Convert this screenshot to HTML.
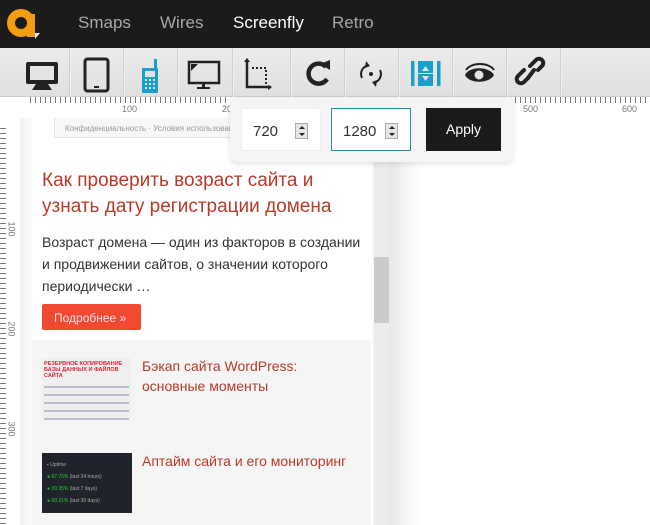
<!DOCTYPE html>
<html style="overflow:hidden;width:650px;height:525px"><head><meta charset="utf-8"><style>
*{margin:0;padding:0;box-sizing:border-box}
body{width:650px;height:525px;overflow:hidden;background:#fff;font-family:"Liberation Sans",Arial,sans-serif;position:relative}
.top{position:absolute;left:0;top:0;width:650px;height:48px;background:#1b1b1b}
.nav{position:absolute;top:13px;font-size:17px;color:#a8a8a8}
.tb{position:absolute;left:0;top:48px;width:650px;height:49px;background:linear-gradient(#ebebeb,#e0e0e0);border-bottom:1px solid #ccc}
.sep{position:absolute;top:0;width:1px;height:49px;background:#d0d0d0;box-shadow:1px 0 0 #f0f0f0}
.ic{position:absolute;top:0}
.hr{position:absolute;left:30px;top:97px;width:620px;height:6px;background:repeating-linear-gradient(90deg,#777 0 1px,transparent 1px 5px)}
.vr{position:absolute;left:0;top:128px;width:6px;height:397px;background:repeating-linear-gradient(180deg,#777 0 1px,transparent 1px 5px)}
.lab{position:absolute;font-size:9px;color:#777}
.vl{position:absolute;font-size:9px;color:#777;transform:rotate(90deg);left:4px}
.frame{position:absolute;left:20px;top:118px;width:400px;height:407px;background:linear-gradient(90deg,#f0f0f0 0,#fafafa 12px,#fff 12px,#fff 352px,#f0f0f0 354px,#e8e8e8 370px,#f5f5f5 385px,#fff 400px)}
.page{position:absolute;left:32px;top:118px;width:339px;height:407px;background:#fff;overflow:hidden}
.sb{position:absolute;left:374px;top:118px;width:15px;height:407px;background:#ececec}
.thumb{position:absolute;left:374px;top:257px;width:15px;height:66px;background:#cbcbcb}
.pop{position:absolute;left:230px;top:97px;width:283px;height:65px;background:#f5f5f5;border-radius:0 0 8px 8px;box-shadow:0 2px 6px rgba(0,0,0,.12)}
.inp{position:absolute;top:11px;width:80px;height:43px;background:#fff;font-size:15px;color:#333;padding:14px 0 0 11px}
.spin{position:absolute;right:12px;top:14px;width:13px;height:16px;border:1px solid #aaa;background:#e6e6e6}
.spin:before{content:"";position:absolute;left:3px;top:2px;border:3px solid transparent;border-bottom:3px solid #222;border-top:0}
.spin:after{content:"";position:absolute;left:3px;top:9px;border:3px solid transparent;border-top:3px solid #222;border-bottom:0}
</style></head><body>
<div class="top">
<svg style="position:absolute;left:6px;top:6px" width="36" height="36" viewBox="0 0 36 36"><circle cx="15" cy="17" r="10" fill="none" stroke="#f39c12" stroke-width="8"/><rect x="21" y="8" width="8" height="23" fill="#f39c12"/><path d="M29 27 L34 27 L29 33Z" fill="#eee"/></svg>
<div class="nav" style="left:78px">Smaps</div>
<div class="nav" style="left:160px">Wires</div>
<div class="nav" style="left:233px;color:#fff">Screenfly</div>
<div class="nav" style="left:332px">Retro</div>
</div>
<div class="tb">
<div class="sep" style="left:69px"></div><div class="sep" style="left:123px"></div><div class="sep" style="left:177px"></div><div class="sep" style="left:232px"></div><div class="sep" style="left:290px"></div><div class="sep" style="left:344px"></div><div class="sep" style="left:398px"></div><div class="sep" style="left:452px"></div><div class="sep" style="left:506px"></div><div class="sep" style="left:560px"></div>
<svg class="ic" width="650" height="49">
<g fill="#222"><rect x="26" y="14" width="32" height="22" rx="2"/><rect x="30" y="18" width="24" height="14" fill="#e3e3e3"/><path d="M36 36h12l4 6H32z"/></g>
<rect x="85" y="11" width="23" height="32" rx="2.5" fill="none" stroke="#222" stroke-width="3"/><rect x="94" y="38" width="5" height="2" fill="#222"/>
<g fill="#1a9fc9"><rect x="142" y="20" width="16" height="25" rx="1"/><rect x="154" y="11" width="3" height="10"/></g><g fill="#e3e3e3"><rect x="145" y="23" width="10" height="6"/><rect x="145" y="31" width="2" height="2"/><rect x="149" y="31" width="2" height="2"/><rect x="153" y="31" width="2" height="2"/><rect x="145" y="35" width="2" height="2"/><rect x="149" y="35" width="2" height="2"/><rect x="153" y="35" width="2" height="2"/><rect x="145" y="39" width="2" height="2"/><rect x="149" y="39" width="2" height="2"/><rect x="153" y="39" width="2" height="2"/></g>
<g fill="#222"><rect x="189" y="14" width="30" height="21" fill="none" stroke="#222" stroke-width="2.5"/><path d="M191 16h7l-7 7z"/><rect x="202" y="35" width="3" height="4"/><rect x="197" y="39" width="13" height="2"/></g>
<g fill="none" stroke="#222" stroke-width="2.5"><path d="M247 12v27h24"/></g><g fill="none" stroke="#222" stroke-width="2" stroke-dasharray="2 2"><path d="M252 20h14v17"/></g><path d="M244 14l3-4 3 4z M268 37l4 2-4 3z" fill="#222"/>
<path d="M326 19 A10 10 0 1 0 327 31" fill="none" stroke="#222" stroke-width="4.5"/><path d="M320 16l10-4 0 10z" fill="#222"/>
<g fill="none" stroke="#222" stroke-width="2"><path d="M366 18a9 9 0 0 0-4 12"/><path d="M376 34a9 9 0 0 0 4-12"/></g><path d="M366 13l4 5-5 2z M376 39l-4-5 5-2z" fill="#222"/><circle cx="371" cy="26" r="2" fill="#222"/>
<g fill="#1a9fc9"><rect x="411" y="13" width="3.5" height="25"/><rect x="437" y="13" width="3.5" height="25"/><rect x="418" y="13" width="15" height="25"/></g><path d="M422 23l3.5-5 3.5 5z M422 28l3.5 5 3.5-5z" fill="#e3e3e3"/><rect x="418" y="25" width="15" height="1" fill="#e3e3e3"/>
<path d="M465 27c4-9 24-9 29 0c-5 9-25 9-29 0z" fill="#222"/><circle cx="479" cy="27" r="4.5" fill="#e3e3e3"/><path d="M466 22c5-8 23-8 28 0" fill="none" stroke="#222" stroke-width="2"/>
<g fill="none" stroke="#222" stroke-width="4" stroke-linecap="round"><path d="M528 30l-4 4a4 4 0 0 1-6-6l6-6"/><path d="M538 22l4-4a4 4 0 0 0-6-6l-6 6"/><path d="M528 30l6-8"/></g>
</svg>
</div>
<div class="hr"></div>
<div class="lab" style="left:122px;top:104px">100</div>
<div class="lab" style="left:222px;top:104px">200</div>
<div class="lab" style="left:523px;top:104px">500</div>
<div class="lab" style="left:622px;top:104px">600</div>
<div class="vr"></div>
<div class="vl" style="top:224px">100</div>
<div class="vl" style="top:324px">200</div>
<div class="vl" style="top:424px">300</div>
<div class="frame"></div>
<div class="page">
<div style="position:absolute;left:22px;top:0;width:300px;height:20px;background:#f7f7f7;border:1px solid #e6e6e6;border-top:0;font-size:8px;color:#999;padding:6px 0 0 10px">Конфиденциальность · Условия использования</div>
<div style="position:absolute;left:10px;top:50px;width:325px;font-size:19px;line-height:26px;color:#b73a2a">Как проверить возраст сайта и узнать дату регистрации домена</div>
<div style="position:absolute;left:10px;top:113px;width:325px;font-size:14px;line-height:22px;color:#333">Возраст домена — один из факторов в создании и продвижении сайтов, о значении которого периодически …</div>
<div style="position:absolute;left:10px;top:186px;width:99px;height:26px;background:#f04a30;border-radius:2px;color:#fde;font-size:12px;padding:7px 0 0 12px">Подробнее »</div>
<div style="position:absolute;left:0;top:222px;width:339px;height:200px;background:#f5f5f5"></div>
<div style="position:absolute;left:10px;top:240px;width:89px;height:60px;background:#efefef;padding:3px 2px">
<div style="font-size:5.5px;font-weight:bold;color:#e0203a;line-height:6px">РЕЗЕРВНОЕ КОПИРОВАНИЕ<br>БАЗЫ ДАННЫХ И ФАЙЛОВ САЙТА</div>
<div style="margin-top:4px;height:40px;background:repeating-linear-gradient(180deg,transparent 0 3px,#99b 3px 5px,transparent 5px 8px);opacity:.6"></div></div>
<div style="position:absolute;left:110px;top:238px;font-size:14px;line-height:20px;color:#b73a2a">Бэкап сайта WordPress:<br>основные моменты</div>
<div style="position:absolute;left:10px;top:335px;width:90px;height:60px;background:#20242a;font-size:5px;color:#aaa;padding:6px 5px;line-height:12px">▪ Uptime<br><span style="color:#2c3">● 97.75%</span> (last 24 hours)<br><span style="color:#2c3">● 99.35%</span> (last 7 days)<br><span style="color:#2c3">● 99.21%</span> (last 30 days)</div>
<div style="position:absolute;left:110px;top:335px;font-size:14px;color:#b73a2a">Аптайм сайта и его мониторинг</div>
</div>
<div class="sb"></div><div class="thumb"></div>
<div class="pop">
<div class="inp" style="left:11px;border:1px solid #eee">720<span class="spin"></span></div>
<div class="inp" style="left:101px;border:1px solid #2a8c9c">1280<span class="spin"></span></div>
<div style="position:absolute;left:196px;top:11px;width:75px;height:43px;background:#1b1b1b;color:#fff;font-size:14px;text-align:center;line-height:43px">Apply</div>
</div>
</body></html>
